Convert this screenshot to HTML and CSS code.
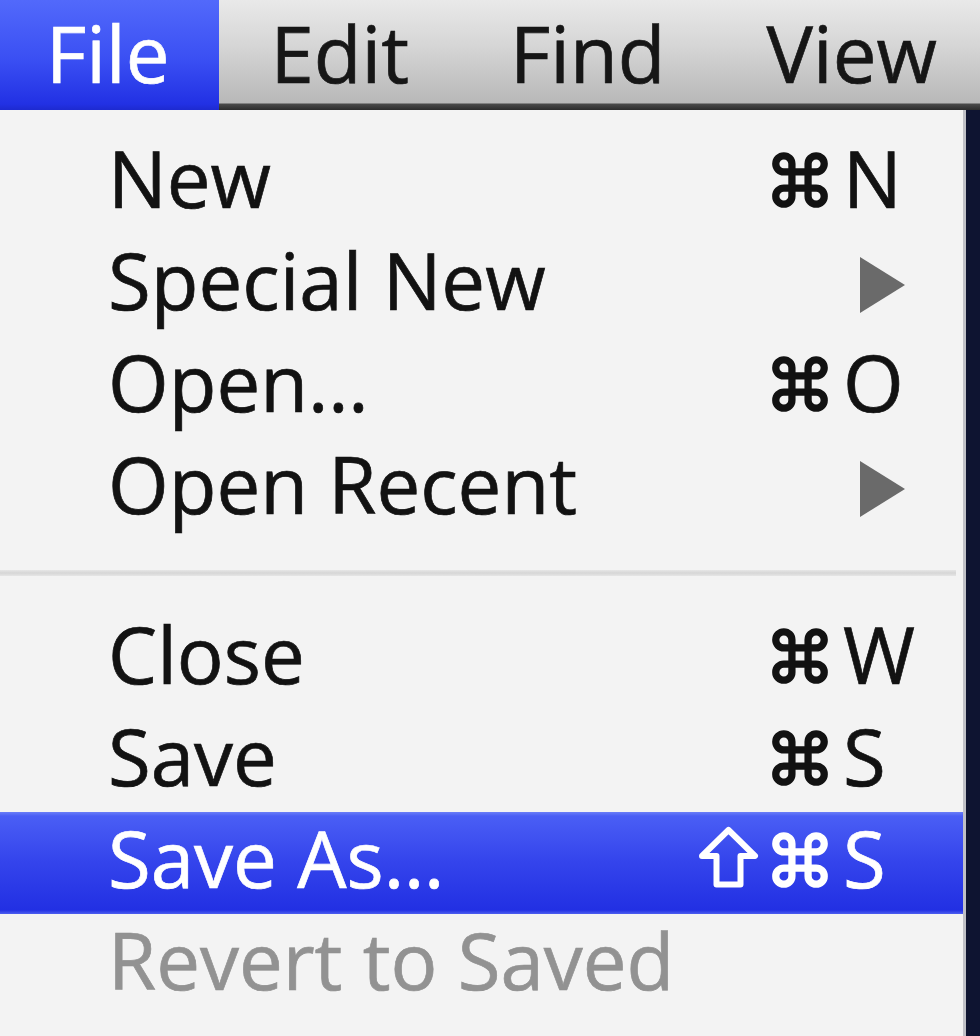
FILE: index.html
```html
<!DOCTYPE html>
<html lang="en">
<head>
<meta charset="utf-8">
<title>File menu</title>
<link rel="stylesheet" href="styles.css">
</head>
<body>
  <nav class="menubar">
    <div class="title title-first active">File</div>
    <div class="title">Edit</div>
    <div class="title">Find</div>
    <div class="title">View</div>
  </nav>
  <div class="stage">
    <ul class="menu">
      <li class="item">
        <span class="label">New</span>
        <span class="mods"><svg class="cmd" viewBox="1.6 1.6 20.8 20.8"><path d="M15 6v12a3 3 0 1 0 3-3H6a3 3 0 1 0 3 3V6a3 3 0 1 0-3 3h12a3 3 0 1 0-3-3"/></svg></span>
        <span class="key">N</span>
      </li>
      <li class="item">
        <span class="label">Special New</span>
        <span class="mods"></span>
        <span class="key key-arrow"><svg class="arrow" viewBox="0 0 45 56"><polygon points="0,0 45,28 0,56"/></svg></span>
      </li>
      <li class="item">
        <span class="label">Open…</span>
        <span class="mods"><svg class="cmd" viewBox="1.6 1.6 20.8 20.8"><path d="M15 6v12a3 3 0 1 0 3-3H6a3 3 0 1 0 3 3V6a3 3 0 1 0-3 3h12a3 3 0 1 0-3-3"/></svg></span>
        <span class="key">O</span>
      </li>
      <li class="item">
        <span class="label">Open Recent</span>
        <span class="mods"></span>
        <span class="key key-arrow"><svg class="arrow" viewBox="0 0 45 56"><polygon points="0,0 45,28 0,56"/></svg></span>
      </li>
      <li class="separator" role="separator"></li>
      <li class="item">
        <span class="label">Close</span>
        <span class="mods"><svg class="cmd" viewBox="1.6 1.6 20.8 20.8"><path d="M15 6v12a3 3 0 1 0 3-3H6a3 3 0 1 0 3 3V6a3 3 0 1 0-3 3h12a3 3 0 1 0-3-3"/></svg></span>
        <span class="key">W</span>
      </li>
      <li class="item">
        <span class="label">Save</span>
        <span class="mods"><svg class="cmd" viewBox="1.6 1.6 20.8 20.8"><path d="M15 6v12a3 3 0 1 0 3-3H6a3 3 0 1 0 3 3V6a3 3 0 1 0-3 3h12a3 3 0 1 0-3-3"/></svg></span>
        <span class="key">S</span>
      </li>
      <li class="item selected">
        <span class="label">Save As…</span>
        <span class="mods"><svg class="shift" viewBox="0 0 63 63"><path d="M31.5 5 L58 31 H43.5 V59.5 H19.5 V31 H5 Z"/></svg><svg class="cmd" viewBox="1.6 1.6 20.8 20.8"><path d="M15 6v12a3 3 0 1 0 3-3H6a3 3 0 1 0 3 3V6a3 3 0 1 0-3 3h12a3 3 0 1 0-3-3"/></svg></span>
        <span class="key">S</span>
      </li>
      <li class="item disabled">
        <span class="label">Revert to Saved</span>
        <span class="mods"></span>
        <span class="key"></span>
      </li>
    </ul>
  </div>
</body>
</html>
```

FILE: styles.css
```css
* { box-sizing: border-box; }

html, body {
  margin: 0;
  padding: 0;
  height: 100%;
}

body {
  background: #0e1431;
  font-family: "Open Sans", "DejaVu Sans", sans-serif;
  color: #121212;
  overflow: hidden;
}

.menubar {
  display: flex;
  height: 110px;
  background: linear-gradient(to bottom, #e9e9e9 0, #d6d6d6 45px, #b8b8b8 103px, #4a4a4a 104px, #2c2c2c 110px);
}

.title {
  height: 110px;
  padding: 0 50px 4px 51px;
  font-size: 78px;
  line-height: 106px;
  color: #161616;
  white-space: nowrap;
  -webkit-text-stroke: 0.7px currentColor;
}

.title-first { padding-left: 46px; padding-right: 50px; }

.title.active {
  color: #ffffff;
  background: linear-gradient(to bottom, #5269fb 0, #3a4ff3 60px, #2231e4 104px, #1d2ad0 110px);
}

.stage {
  height: calc(100% - 110px);
}

.menu {
  list-style: none;
  margin: 0;
  padding: 22px 0 0 0;
  width: 966px;
  height: 100%;
  background: #f3f3f3;
  border-right: 3px solid #bfc0c6;
}

.item {
  display: grid;
  grid-template-columns: 1fr auto 62px;
  column-gap: 15px;
  height: 102px;
  padding: 0 58px 10px 108px;
  font-size: 78px;
  line-height: 92px;
  white-space: nowrap;
  -webkit-text-stroke: 0.7px currentColor;
}

.mods {
  display: flex;
  justify-content: flex-end;
  align-items: flex-end;
  gap: 12px;
  height: 76px;
}

.key { text-align: left; }
.key-arrow { text-align: right; }

.cmd {
  width: 56px;
  height: 56px;
  fill: none;
  stroke: currentColor;
  stroke-width: 2.7;
  stroke-linecap: round;
  stroke-linejoin: round;
}

.shift {
  width: 63px;
  height: 63px;
  fill: none;
  stroke: currentColor;
  stroke-width: 6;
  stroke-linejoin: round;
}

.arrow {
  width: 45px;
  height: 56px;
  fill: #6a6a6a;
  vertical-align: -3px;
}

.separator {
  height: 6px;
  margin: 30px 7px 32px 0;
  background: linear-gradient(to bottom, #e6e6e6, #d6d6d6 50%, #e6e6e6);
}

.item.selected {
  color: #ffffff;
  background: linear-gradient(to bottom, #6a7ef8 0, #4a5ef5 4px, #3444ec 50px, #2230e3 98px, #4d5ff0 102px);
}

.item.disabled { color: #929292; }
```
